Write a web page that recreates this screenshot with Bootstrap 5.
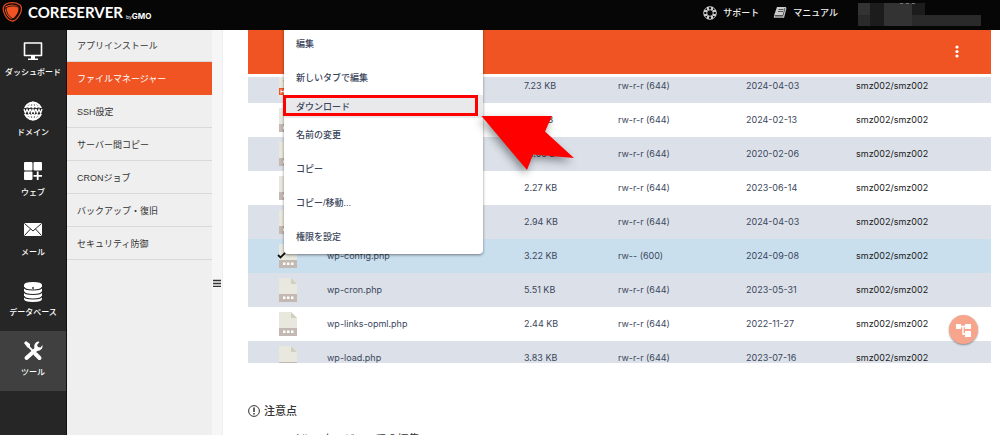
<!DOCTYPE html>
<html lang="ja">
<head>
<meta charset="utf-8">
<meta name="viewport" content="width=device-width, initial-scale=1">
<title>CORESERVER ファイルマネージャー</title>
<link href="https://cdn.jsdelivr.net/npm/bootstrap@5.3.0/dist/css/bootstrap.min.css" rel="stylesheet">
<style>
:root{--brand:#f05423}
body{font-family:"Liberation Sans","Noto Sans CJK JP",sans-serif;font-size:11px;line-height:16px;color:#333;background:#fff;overflow:hidden}
a{text-decoration:none;color:inherit}
.topbar{height:30px;background:#060606;color:#eee;z-index:20;padding:0 19px 0 2px}
.brandlink{gap:6px;padding-bottom:6px}
.brandname{font-family:Lato,sans-serif;font-weight:700;font-size:15px;color:#fff}
.bygmo{font-family:Inter,sans-serif;font-weight:700;font-size:8px;line-height:8px;color:#fff;margin-left:-3px}
.bygmo small{font-size:5px;font-weight:400}
.topnav{gap:14px;padding-bottom:5px}
.toplink{font-size:9px;font-weight:500;gap:6px}
.account{width:123px;height:24px;margin:2px 0 -2px 6px}
.shell{min-height:calc(100vh - 30px)}
.rail{width:67px;background:#262626;border-right:1px solid #111;padding-top:1px}
.rail a{height:60px;color:#fff;font-size:8px;font-weight:500;padding-top:6px;white-space:nowrap}
.rail a.active{background:#404040}
.rail svg{width:28px;height:28px}
.submenu{width:145px;background:#efefef}
.submenu a{height:33px;padding:1px 0 0 10px;border-bottom:1px solid #d9d9d9;font-size:9px;color:#333}
.submenu a:first-child{height:32px}
.submenu a.active{background:var(--brand);color:#fff;border-color:var(--brand)}
.splitter{width:11px;background:#f6f6f6;border-right:1px solid #eee;padding-top:245px}
.pane{padding:0 9px 0 25px;min-width:0}
.toolbar{height:44px;background:var(--brand);padding-right:28px;margin-bottom:3px}
.toolbar button,.tree{border:0;background:none;padding:0}
.filelist{height:286px;overflow:hidden}
.files{table-layout:fixed;margin-top:-8px;width:100%;font-family:Inter,sans-serif;font-size:9px;line-height:16px;color:#3b465c}
.files tr{height:34px;background:#fff}
.files tr:nth-child(odd){background:#dce1e9}
.files tr.selected{background:#c9dfee}
.files td{padding:0;vertical-align:middle;white-space:nowrap}
.files td:last-child{color:#222}
.files svg{display:block;margin-left:31px}
.ctx{top:-3px;left:61px;width:199px;padding:0;border:0;border-radius:4px;box-shadow:0 1px 3px #0007;z-index:5}
.ctx .dropdown-item{height:34px;padding:0 12px;font-size:9px;color:#3b465c;font-weight:500}
.ctx .dropdown-item.active{height:23px;background:#e9e9ec}
.marker{left:60px;top:65px;width:195px;height:21px;border:3px solid #f00;z-index:6}
.arrow{left:238px;top:80px;z-index:7;filter:drop-shadow(-2px 4px 4px #0006)}
.tree{right:22px;top:285px;width:29px;height:29px;border-radius:50%;background:#f8a58d;box-shadow:0 1px 2px #0006;z-index:4}
.check{left:54px;top:221px;z-index:4}
.notes{padding-top:39px}
.notes h2{font-size:11px;line-height:16px;font-weight:500;margin:0;padding-top:1px}
.notes p{font-size:11px;line-height:16px;margin:12px 0 0 3px;gap:9px}
</style>
</head>
<body>
<svg class="d-none">
<symbol id="doc" viewBox="0 0 18 24"><path fill="#e8e8df" d="M0 0h12l6 6v18H0z"/><path fill="#d0d1bd" d="M12 0l6 6h-6z"/><path fill="#c4b8b2" d="M0 16h18v8H0z"/><path fill="#fff" d="M4 18.500h2.500v2.500H4zM8 18.500h2.500v2.500H8zM12 18.500h2.500v2.500H12z"/></symbol>
</svg>
<header class="topbar d-flex align-items-center position-relative">
<a href="#" class="brandlink d-flex align-items-center">
<svg width="20" height="20" viewBox="0 0 20 20"><path fill="none" stroke="#d9481f" stroke-width="1.300" d="M3 13Q-1 5 4 2q8-3 14 1 3 3 0 9-3 6-7 7-5 0-8-6"/><path fill="#f05423" d="M4 4q6-3 12 0 2 3-1 8-3 5-6 5-4-2-6-8-.500-4 1-5"/><path fill="none" stroke="#2a100a" stroke-width=".900" d="M2 7q7-5 14-2M17 4q1 8-6 14M4 5q0 8 7 12"/></svg>
<span class="brandname">CORESERVER</span><span class="bygmo mt-2"><small>by</small>GMO</span></a>
<nav class="topnav d-flex align-items-center ms-auto">
<a href="#" class="toplink d-flex align-items-center"><svg width="14" height="14" viewBox="0 0 14 14" fill="none" stroke="#ccc"><circle cx="7" cy="7" r="6.300"/><circle cx="7" cy="7" r="3.300"/><path stroke-width="2" d="M5 1v3M9 1v3M5 10v3M9 10v3M1 5h3M1 9h3M10 5h3M10 9h3"/></svg>サポート</a>
<a href="#" class="toplink d-flex align-items-center"><svg width="14" height="13" viewBox="0 0 13 13"><path fill="#ccc" d="M3.500 1H12l1 1-2.500 10H1q-1-1-.5-2.500z"/><path stroke="#333" stroke-width=".8" fill="none" d="M5 3.500h5M4.500 5.500h5M1 9.500h8.500L11.500 2M1.500 11h8.500"/></svg>マニュアル</a>
<svg class="account" viewBox="0 0 123 24"><path fill="#333" d="M0 0h12v12H0zM26 0h28v23H26z"/><path fill="#2a2a2a" d="M0 12h12v11H0zM54 12h69v11H54z"/><path fill="#1c1c1c" d="M12 0h14v23H12zM54 0h13v12H54z"/><path fill="#777" d="M42 0h3v1h-3zM48 0h3v1h-3zM54 0h3v1h-3z"/></svg>
</nav>
</header>
<div class="shell d-flex">
<nav class="rail flex-shrink-0">
<a href="#" class="d-flex flex-column align-items-center"><svg viewBox="0 0 28 28"><path fill="none" stroke="#fff" stroke-width="1.600" stroke-linejoin="round" d="M5.500 6h17v12.500h-17z"/><path fill="#fff" d="M12 19h4v2.500h3V23H9v-1.500h3z"/></svg>ダッシュボード</a>
<a href="#" class="d-flex flex-column align-items-center"><svg viewBox="0 0 28 28"><g fill="none" stroke="#fff" stroke-width="1.800"><circle cx="14" cy="14" r="8.500"/><ellipse cx="14" cy="14" rx="4" ry="8.500"/><path d="M14 5v18M7 9.500h14M7 18.500h14"/></g><path fill="#262626" d="M4 11h20v6H4z"/><path fill="none" stroke="#fff" stroke-width="1.300" d="M5 12l1.300 4L8 12.500 9.700 16l1.300-4M11.500 12l1 4 1.500-3.500 1.500 3.500 1-4M17 12l1.300 4 1.700-3.500 1.700 3.500 1.300-4"/></svg>ドメイン</a>
<a href="#" class="d-flex flex-column align-items-center"><svg viewBox="0 0 28 28"><g fill="#fff"><rect x="5" y="5" width="8.500" height="8.500" rx="1"/><rect x="14.500" y="5" width="8.500" height="8.500" rx="1"/><rect x="5" y="14.500" width="8.500" height="8.500" rx="1"/><path d="M17.800 14.500h1.800v3.400H23v1.800h-3.400V23h-1.800v-3.300h-3.300v-1.800h3.300z"/></g></svg>ウェブ</a>
<a href="#" class="d-flex flex-column align-items-center"><svg viewBox="0 0 28 28"><rect x="5" y="6" width="18" height="13" rx="1" fill="#fff"/><path fill="none" stroke="#262626" d="M5.500 6.500l8.500 7.500 8.500-7.500M5.500 18.500l6-6.500M22.500 18.500l-6-6.500"/></svg>メール</a>
<a href="#" class="d-flex flex-column align-items-center"><svg viewBox="0 0 28 28"><path fill="#fff" d="M5 8q0-3 9-3t9 3v14q0 3-9 3t-9-3z"/><path fill="none" stroke="#262626" stroke-width="1.200" d="M5 10q0 3 9 3t9-3M5 14.500q0 3 9 3t9-3M5 19q0 3 9 3t9-3"/><circle cx="14" cy="11" r=".9" fill="#262626"/></svg>データベース</a>
<a href="#" class="active d-flex flex-column align-items-center"><svg viewBox="0 0 28 28"><path stroke="#fff" stroke-width="4" stroke-linecap="round" fill="none" d="M16.500 17l4 4M7.500 21l10-9"/><path stroke="#fff" stroke-width="1.800" d="M8 8l9 9"/><path fill="#fff" d="M5 6l2-2 4 3v3L9 11zM20.500 5l-2.500 3 1 2 2.500.5 2-2.500q.5 4-3 5.500-3 1-5-2-1-4 1.500-6 2-1.500 3.500-.5"/></svg>ツール</a>
</nav>
<nav class="submenu flex-shrink-0">
<a href="#" class="d-flex align-items-center">アプリインストール</a>
<a href="#" class="active d-flex align-items-center">ファイルマネージャー</a>
<a href="#" class="d-flex align-items-center">SSH設定</a>
<a href="#" class="d-flex align-items-center">サーバー間コピー</a>
<a href="#" class="d-flex align-items-center">CRONジョブ</a>
<a href="#" class="d-flex align-items-center">バックアップ・復旧</a>
<a href="#" class="d-flex align-items-center">セキュリティ防御</a>
</nav>
<div class="splitter flex-shrink-0"><svg class="d-block mx-auto mt-1" width="8" height="8" viewBox="0 0 8 8"><path stroke="#333" stroke-width="1.400" d="M0 1.500h8M0 4.500h8M0 7.500h8"/></svg></div>
<main class="pane flex-grow-1 position-relative">
<div class="toolbar d-flex align-items-center justify-content-end"><button type="button" aria-label="メニュー" class="d-flex"><svg width="12" height="14" viewBox="0 0 12 14" fill="#fff"><circle cx="6" cy="2" r="1.600"/><circle cx="6" cy="6.500" r="1.600"/><circle cx="6" cy="11" r="1.600"/></svg></button></div>
<div class="filelist">
<table class="files">
<colgroup><col style="width:79px"><col><col style="width:94px"><col style="width:128px"><col style="width:110px"><col style="width:135px"></colgroup>
<tbody>
<tr><td><svg width="18" height="24" viewBox="0 0 18 24"><path fill="#e8e8df" d="M0 0h12l6 6v18H0z"/><path fill="#f05423" d="M0 14h18v7H0zM4 7l3-2v3z"/><path fill="none" stroke="#fff" d="M2 15.500v4M5 15.500v4M2 17.500h3"/></svg></td><td></td><td>7.23 KB</td><td>rw-r-r (644)</td><td>2024-04-03</td><td>smz002/smz002</td></tr>
<tr><td><svg width="18" height="24"><use href="#doc"/></svg></td><td></td><td>2.11 KB</td><td>rw-r-r (644)</td><td>2024-02-13</td><td>smz002/smz002</td></tr>
<tr><td><svg width="18" height="24"><use href="#doc"/></svg></td><td></td><td>41.00 B</td><td>rw-r-r (644)</td><td>2020-02-06</td><td>smz002/smz002</td></tr>
<tr><td><svg width="18" height="24"><use href="#doc"/></svg></td><td></td><td>2.27 KB</td><td>rw-r-r (644)</td><td>2023-06-14</td><td>smz002/smz002</td></tr>
<tr><td><svg width="18" height="24"><use href="#doc"/></svg></td><td></td><td>2.94 KB</td><td>rw-r-r (644)</td><td>2024-04-03</td><td>smz002/smz002</td></tr>
<tr class="selected"><td><svg width="18" height="24"><use href="#doc"/></svg></td><td>wp-config.php</td><td>3.22 KB</td><td>rw-- (600)</td><td>2024-09-08</td><td>smz002/smz002</td></tr>
<tr><td><svg width="18" height="24"><use href="#doc"/></svg></td><td>wp-cron.php</td><td>5.51 KB</td><td>rw-r-r (644)</td><td>2023-05-31</td><td>smz002/smz002</td></tr>
<tr><td><svg width="18" height="24"><use href="#doc"/></svg></td><td>wp-links-opml.php</td><td>2.44 KB</td><td>rw-r-r (644)</td><td>2022-11-27</td><td>smz002/smz002</td></tr>
<tr><td><svg width="18" height="24"><use href="#doc"/></svg></td><td>wp-load.php</td><td>3.83 KB</td><td>rw-r-r (644)</td><td>2023-07-16</td><td>smz002/smz002</td></tr>
</tbody></table>
</div>
<section class="notes">
<h2 class="d-flex align-items-center"><svg class="me-1" width="12" height="12" viewBox="0 0 12 12"><circle cx="6" cy="6" r="5.400" fill="none" stroke="#333"/><path stroke="#333" stroke-width="1.500" d="M6 2.500v4.500M6 8v1.500"/></svg>注意点</h2>
<p class="d-flex align-items-center"><svg width="7" height="7"><circle cx="3.500" cy="3.500" r="3.500" fill="#f05423"/></svg>ファイルマネージャーでの編集</p>
</section>
<svg class="check position-absolute" width="10" height="8" viewBox="0 0 10 8"><path fill="none" stroke="#111" stroke-width="1.800" d="M1 4l2.500 2.500L9 1"/></svg>
<button type="button" aria-label="ツリー" class="tree position-absolute"><svg class="d-block mx-auto" width="15" height="14" viewBox="0 0 15 14"><path fill="#fff" d="M0 1h5v5H0zM9 1h6v5H9zM9 8h6v6H9z"/><path fill="none" stroke="#fff" stroke-width="1.400" d="M4 3.500h6M7 3.500v7.500h3"/></svg></button>
<div class="ctx dropdown-menu show position-absolute">
<a href="#" class="dropdown-item d-flex align-items-center">編集</a>
<a href="#" class="dropdown-item d-flex align-items-center">新しいタブで編集</a>
<a href="#" class="dropdown-item active d-flex align-items-center">ダウンロード</a>
<a href="#" class="dropdown-item d-flex align-items-center">名前の変更</a>
<a href="#" class="dropdown-item d-flex align-items-center">コピー</a>
<a href="#" class="dropdown-item d-flex align-items-center">コピー/移動...</a>
<a href="#" class="dropdown-item d-flex align-items-center">権限を設定</a>
</div>
<div class="marker position-absolute"></div>
<svg class="arrow position-absolute" width="120" height="66" viewBox="0 0 120 66"><path fill="#f00" d="M20.500 6H91l-7 15.500L113 48l-41-3.500L66 60z"/></svg>
</main>
</div>
<script src="https://cdn.jsdelivr.net/npm/bootstrap@5.3.0/dist/js/bootstrap.bundle.min.js"></script>
</body>
</html>
